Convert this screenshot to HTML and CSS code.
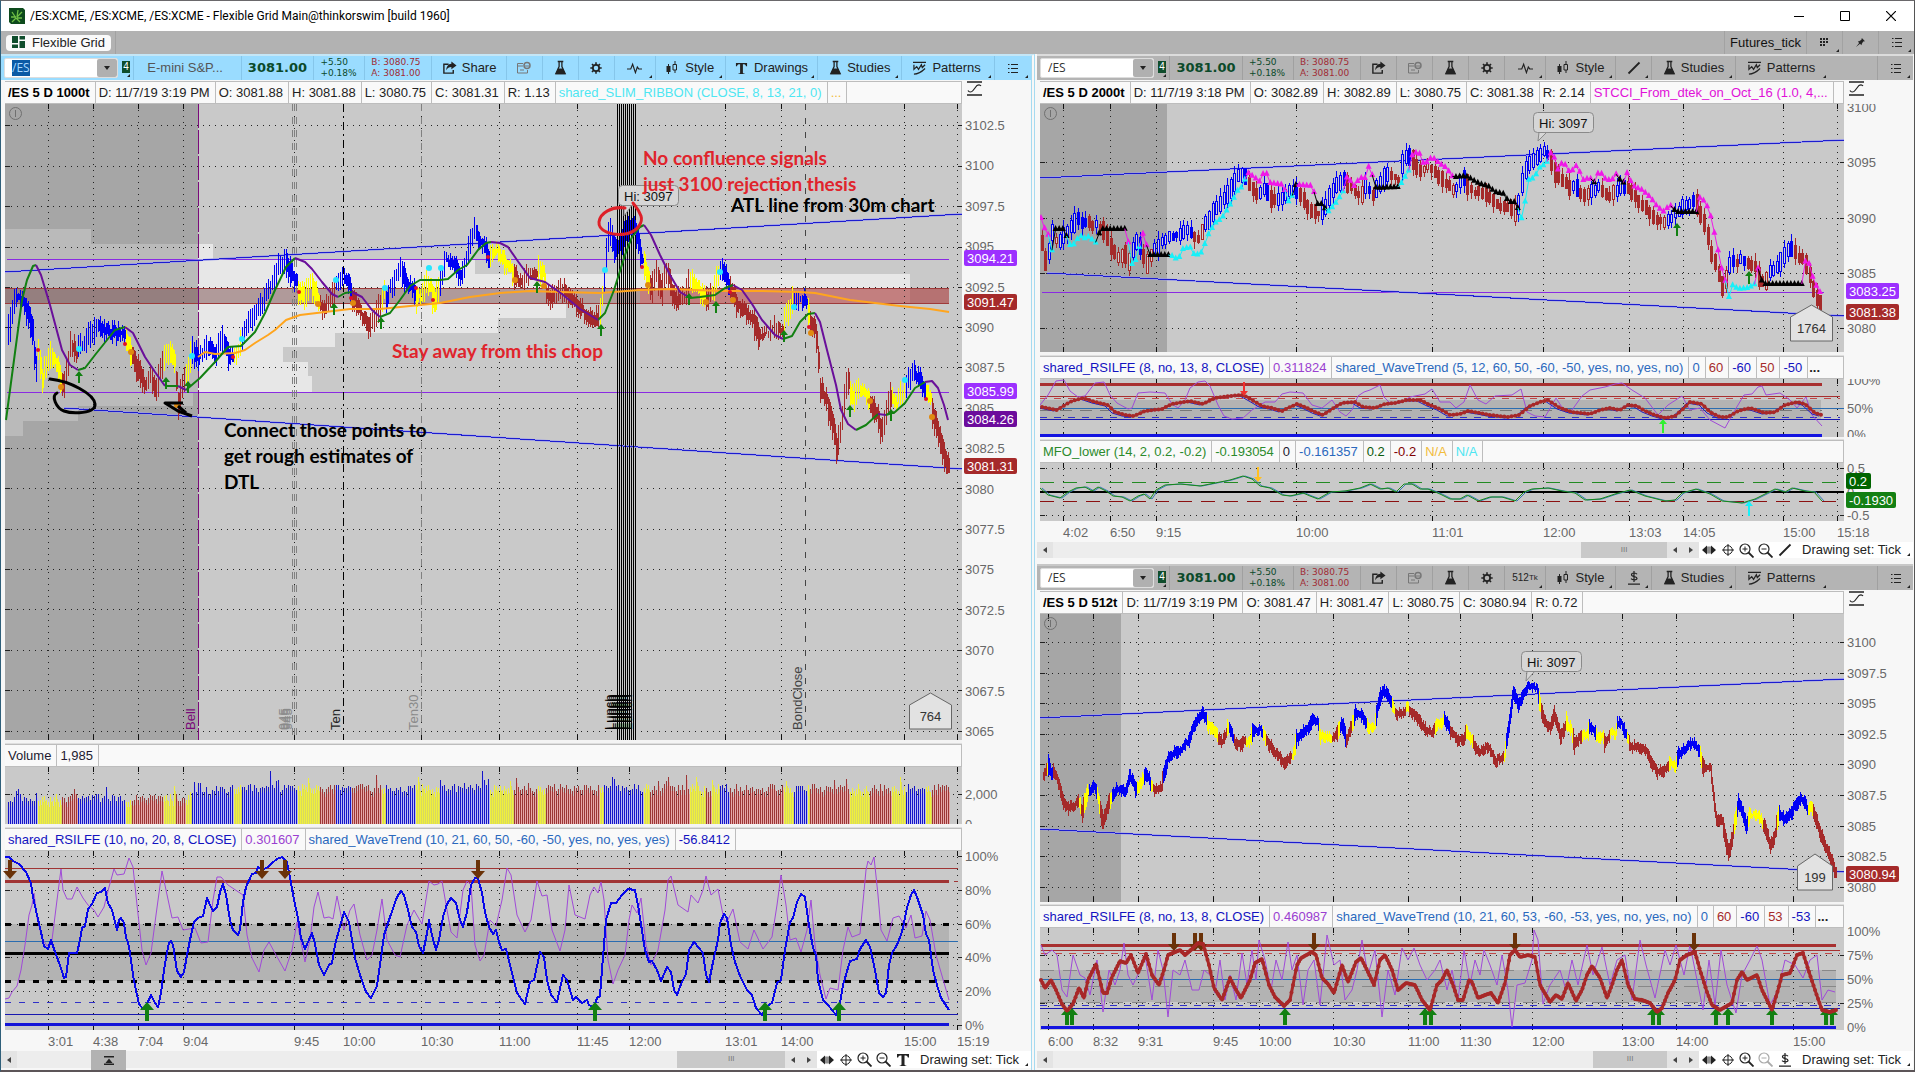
FILE: index.html
```html
<!DOCTYPE html>
<html lang="en">
<head>
<meta charset="utf-8">
<title>/ES:XCME, /ES:XCME, /ES:XCME - Flexible Grid Main@thinkorswim [build 1960]</title>
<link rel="stylesheet" href="styles.css">
</head>
<body>
<svg class="defs" aria-hidden="true">
  <symbol id="i-share" viewBox="0 0 16 14"><path d="M7 3H2v9.500h10V9" fill="none" stroke="currentColor" stroke-width="1.500"/><path d="M10 0l5.500 4.200L10 8.400V6C7.500 6 6 7 4.500 9.500 4.700 5.500 6.500 2.800 10 2.500z" fill="currentColor"/></symbol>
  <symbol id="i-event" viewBox="0 0 16 14"><path d="M7 2.500H1.500v9.500h10V9M1.500 5H7" fill="none" stroke="currentColor"/><circle cx="11" cy="4.500" r="3" fill="none" stroke="currentColor" stroke-width="1.500"/><path d="M8.500 5h5M4 9h4" stroke="currentColor"/></symbol>
  <symbol id="i-flask" viewBox="0 0 14 16"><path d="M4 1h6M5.500 1v5.500L2 14h10L8.500 6.500V1" fill="none" stroke="currentColor" stroke-width="1.400"/><path d="M4.500 8.500h5L12.500 14.800h-11z" fill="currentColor"/></symbol>
  <symbol id="i-gear" viewBox="0 0 16 16"><circle cx="8" cy="8" r="3.600" fill="none" stroke="currentColor" stroke-width="2"/><path d="M8 1.500v3M8 11.500v3M1.500 8h3M11.500 8h3M3.400 3.400l2 2M10.600 10.600l2 2M12.600 3.400l-2 2M5.400 10.600l-2 2" stroke="currentColor" stroke-width="1.800"/></symbol>
  <symbol id="i-pulse" viewBox="0 0 16 12"><path d="M0 7h4l2-5 3 9 2-6 1.500 2H16" fill="none" stroke="currentColor" stroke-width="1.200"/></symbol>
  <symbol id="i-candle" viewBox="0 0 12 14"><path d="M2.500 3v10M9 0v3M9 9v3" stroke="currentColor"/><path d="M.5 5h4v6h-4z" fill="currentColor"/><path d="M7 3.500h3.500V9H7z" fill="none" stroke="currentColor"/></symbol>
  <symbol id="i-text" viewBox="0 0 14 14"><path d="M1 1h12v3.600h-1.200C11.500 3 11 2.500 8.500 2.500v8.800c0 .9.500 1.200 1.800 1.200V13H3.700v-.5c1.300 0 1.800-.3 1.800-1.200V2.500C3 2.500 2.500 3 2.200 4.600H1z" fill="currentColor"/></symbol>
  <symbol id="i-pattern" viewBox="0 0 14 15"><path d="M0 1.500h14M1 4v5l3-3 2 3 3-5 1 3 3-3M1 14c4 0 8-2 12-6" fill="none" stroke="currentColor" stroke-width="1.300"/></symbol>
  <symbol id="i-list" viewBox="0 0 10 11"><path d="M3 1.500h7M3 5.500h7M3 9.500h7M0 1.500h1.500M0 5.500h1.500M0 9.500h1.500" stroke="currentColor"/></symbol>
  <symbol id="i-line" viewBox="0 0 14 14"><path d="M1.500 12.500l11-11" stroke="currentColor" stroke-width="1.800"/></symbol>
  <symbol id="i-dollar" viewBox="0 0 12 14"><path d="M0 13.200h12M6 0v11M9 3.200C8 1.500 3.500 1.500 3.500 3.700c0 2.600 5.500 1.200 5.500 3.600 0 2-4.500 2-6 .3" fill="none" stroke="currentColor" stroke-width="1.200"/></symbol>
  <symbol id="i-curve" viewBox="0 0 15 15"><path d="M0 1h15M0 14h15" stroke="currentColor" stroke-width="1.600"/><path d="M1 9.500c1 2 3.500 2 5 0l4-5c1.500-1 3-1 4 .5" fill="none" stroke="currentColor" stroke-width="1.200"/></symbol>
  <symbol id="i-pan" viewBox="0 0 14 12"><path d="M0 6l5-4.500v9zM14 6L9 1.500v9z" fill="currentColor"/><path d="M6 2.500v7M8 2.500v7" stroke="currentColor"/></symbol>
  <symbol id="i-cross" viewBox="0 0 12 12"><circle cx="6" cy="6" r="4.300" fill="none" stroke="currentColor"/><path d="M6 0v12M0 6h12" stroke="currentColor"/></symbol>
  <symbol id="i-zin" viewBox="0 0 15 15"><circle cx="6" cy="6" r="5" fill="none" stroke="currentColor" stroke-width="1.200"/><path d="M9.500 9.500l5 5" stroke="currentColor" stroke-width="1.800"/><path d="M6 3.500v5M3.500 6h5" stroke="currentColor"/></symbol>
  <symbol id="i-zout" viewBox="0 0 15 15"><circle cx="6" cy="6" r="5" fill="none" stroke="currentColor" stroke-width="1.200"/><path d="M9.500 9.500l5 5" stroke="currentColor" stroke-width="1.800"/><path d="M3.500 6h5" stroke="currentColor"/></symbol>
  <symbol id="i-dots" viewBox="0 0 9 9"><path d="M0 0h2v2H0zM3 0h2v2H3zM6 0h2v2H6zM0 3h2v2H0zM3 3h2v2H3zM6 3h2v2H6zM0 6h2v2H0zM3 6h2v2H3z" fill="currentColor"/></symbol>
  <symbol id="i-pin" viewBox="0 0 10 10"><path d="M0 10l3.500-4.500L2 4l1.500-.5L6 2 6.500 0 10 3.500 8 4 6.500 6.500 6 8 4.500 6.500z" fill="currentColor"/></symbol>
  <symbol id="i-grid" viewBox="0 0 13 13"><path d="M0 0h6v7H0zM7.500 0H13v3.500H7.500zM0 8.500h6V12H0zM7.500 5H13v7H7.500z" fill="currentColor"/></symbol>
  <symbol id="i-left" viewBox="0 0 4 6"><path d="M4 0v6L0 3z" fill="currentColor"/></symbol>
  <symbol id="i-right" viewBox="0 0 4 6"><path d="M0 0v6l4-3z" fill="currentColor"/></symbol>
  <symbol id="i-top" viewBox="0 0 10 9"><path d="M0 .8h10M0 8.200h10" stroke="currentColor" stroke-width="1.500"/><path d="M5 2.500L8.500 7h-7z" fill="currentColor"/></symbol>
  <symbol id="i-min" viewBox="0 0 10 10"><path d="M0 5.500h10" stroke="currentColor"/></symbol>
  <symbol id="i-max" viewBox="0 0 10 10"><path d="M.5.500h9v9h-9z" fill="none" stroke="currentColor"/></symbol>
  <symbol id="i-close" viewBox="0 0 10 10"><path d="M0 0l10 10M10 0L0 10" stroke="currentColor" stroke-width="1.200"/></symbol>
  <symbol id="i-leaf" viewBox="0 0 16 16"><path d="M0 0h14l2 2v14H2l-2-2z" fill="#0d4a1c"/><path d="M7 10L3 4M8 9l1-7M8 9l5-5M8 10l5 0M7 10l-4 4M7 10l4 4M7 9L2 9" stroke="#6fbf45" stroke-width="1.300"/></symbol>
</svg>

<div class="window">
  <header class="titlebar">
    <svg class="logo"><use href="#i-leaf"/></svg>
    <h1>/ES:XCME, /ES:XCME, /ES:XCME - Flexible Grid Main@thinkorswim [build 1960]</h1>
    <div class="winbtns">
      <button aria-label="Minimize"><svg width="10" height="10"><use href="#i-min"/></svg></button>
      <button aria-label="Maximize"><svg width="10" height="10"><use href="#i-max"/></svg></button>
      <button aria-label="Close"><svg width="10" height="10"><use href="#i-close"/></svg></button>
    </div>
  </header>

  <nav class="tabs">
    <div class="tabslot"><button class="tab"><svg width="13" height="13"><use href="#i-grid"/></svg>Flexible Grid</button></div>
    <div class="tabtools">
      <button class="cell workspace">Futures_tick</button>
      <button class="cell ico more" aria-label="Layout"><svg width="9" height="9"><use href="#i-dots"/></svg></button>
      <button class="cell ico" aria-label="Pin"><svg width="9" height="9"><use href="#i-pin"/></svg></button>
      <button class="cell ico more" aria-label="Menu"><svg width="10" height="11"><use href="#i-list"/></svg></button>
    </div>
  </nav>

  <main class="workspace-grid">
    <section class="panel panel-main">
      <div class="toolbar active">
        <div class="sym">
          <div class="combo"><input id="sym1" aria-label="Symbol" value="/ES"><button aria-label="Symbol list"></button></div>
          <span class="link more">4</span>
        </div>
        <span class="cell name">E-mini S&amp;P...</span>
        <span class="cell last">3081.00</span>
        <span class="cell chg"><span>+5.50</span><span>+0.18%</span></span>
        <span class="cell ba"><span>B: 3080.75</span><span>A: 3081.00</span></span>
        <button class="cell share"><svg width="15" height="14"><use href="#i-share"/></svg>Share</button>
        <button class="cell ico dim" aria-label="Events"><svg width="16" height="14"><use href="#i-event"/></svg></button>
        <button class="cell ico" aria-label="Flask"><svg width="13" height="16"><use href="#i-flask"/></svg></button>
        <button class="cell ico" aria-label="Settings"><svg width="14" height="14"><use href="#i-gear"/></svg></button>
        <button class="cell tf more" aria-label="Time frame"><svg width="15" height="12"><use href="#i-pulse"/></svg></button>
        <button class="cell style more"><svg width="12" height="14"><use href="#i-candle"/></svg>Style</button>
        <button class="cell drawings more"><svg width="13" height="13"><use href="#i-text"/></svg>Drawings</button>
        <button class="cell studies more"><svg width="13" height="16"><use href="#i-flask"/></svg>Studies</button>
        <button class="cell patterns more"><svg width="13" height="14"><use href="#i-pattern"/></svg>Patterns</button>
        <button class="cell ico last-cell more" aria-label="Menu"><svg width="10" height="11"><use href="#i-list"/></svg></button>
      </div>
      <div class="body">
        <div class="legendrow first">
          <div class="legend"><b>/ES 5 D 1000t</b><span>D: 11/7/19 3:19 PM</span><span>O: 3081.88</span><span>H: 3081.88</span><span>L: 3080.75</span><span>C: 3081.31</span><span>R: 1.13</span><span class="c-cyan">shared_SLIM_RIBBON (CLOSE, 8, 13, 21, 0)</span><span class="c-gold">...</span></div>
          <svg class="curve"><use href="#i-curve"/></svg>
        </div>
        <svg class="pane p-636" data-chart="main"></svg>
        <div class="split wide"></div>
        <div class="legendrow"><div class="legend"><span class="c-ink">Volume</span><span class="c-ink">1,985</span></div></div>
        <svg class="pane p-57" data-chart="volume"></svg>
        <div class="split wide"></div>
        <div class="legendrow"><div class="legend"><span class="c-navy">shared_RSILFE (10, no, 20, 8, CLOSE)</span><span class="c-violet">0.301607</span><span class="c-blue">shared_WaveTrend (10, 21, 60, 50, -60, -50, yes, no, yes, yes)</span><span class="c-navy">-56.8412</span></div></div>
        <svg class="pane open-edge p-179" data-chart="osc"></svg>
        <svg class="times" data-chart="timesMain"></svg>
      </div>
      <footer class="scroll">
        <button class="sb" aria-label="Scroll left"><svg width="4" height="6"><use href="#i-left"/></svg></button>
        <div class="track"><div class="thumb t-14">III</div></div>
        <button class="sb" aria-label="Step left"><svg width="4" height="6"><use href="#i-left"/></svg></button>
        <button class="sb" aria-label="Step right"><svg width="4" height="6"><use href="#i-right"/></svg></button>
        <div class="tools">
          <button aria-label="Pan"><svg width="14" height="12"><use href="#i-pan"/></svg></button>
          <button aria-label="Crosshair"><svg width="12" height="12"><use href="#i-cross"/></svg></button>
          <button aria-label="Zoom in"><svg width="15" height="15"><use href="#i-zin"/></svg></button>
          <button aria-label="Zoom out"><svg width="15" height="15"><use href="#i-zout"/></svg></button>
          <button aria-label="Text"><svg width="14" height="14"><use href="#i-text"/></svg></button>
          <button class="set more">Drawing set: Tick</button>
        </div>
        <button class="pop" aria-label="Expand"><svg width="10" height="9"><use href="#i-top"/></svg></button>
      </footer>
    </section>

    <div class="right">
      <section class="panel panel-top">
        <div class="toolbar">
          <div class="sym">
            <div class="combo"><input aria-label="Symbol" value="/ES"><button aria-label="Symbol list"></button></div>
            <span class="link more">4</span>
          </div>
          <span class="cell last">3081.00</span>
          <span class="cell chg"><span>+5.50</span><span>+0.18%</span></span>
          <span class="cell ba"><span>B: 3080.75</span><span>A: 3081.00</span></span>
          <button class="cell ico" aria-label="Share"><svg width="15" height="14"><use href="#i-share"/></svg></button>
          <button class="cell ico dim" aria-label="Events"><svg width="16" height="14"><use href="#i-event"/></svg></button>
          <button class="cell ico" aria-label="Flask"><svg width="13" height="16"><use href="#i-flask"/></svg></button>
          <button class="cell ico" aria-label="Settings"><svg width="14" height="14"><use href="#i-gear"/></svg></button>
          <button class="cell tf more" aria-label="Time frame"><svg width="15" height="12"><use href="#i-pulse"/></svg></button>
          <button class="cell style more"><svg width="12" height="14"><use href="#i-candle"/></svg>Style</button>
          <button class="cell ico more" aria-label="Line"><svg width="14" height="14"><use href="#i-line"/></svg></button>
          <button class="cell studies more"><svg width="13" height="16"><use href="#i-flask"/></svg>Studies</button>
          <button class="cell patterns open more"><svg width="13" height="14"><use href="#i-pattern"/></svg>Patterns</button>
          <button class="cell ico last-cell ruled more" aria-label="Menu"><svg width="10" height="11"><use href="#i-list"/></svg></button>
        </div>
        <div class="body">
          <div class="legendrow first">
            <div class="legend"><b>/ES 5 D 2000t</b><span>D: 11/7/19 3:18 PM</span><span>O: 3082.89</span><span>H: 3082.89</span><span>L: 3080.75</span><span>C: 3081.38</span><span>R: 2.14</span><span class="c-magenta">STCCI_From_dtek_on_Oct_16 (1.0, 4,...</span></div>
            <svg class="curve"><use href="#i-curve"/></svg>
          </div>
          <svg class="pane p-248" data-chart="top"></svg>
          <div class="split wide"></div>
          <div class="legendrow"><div class="legend"><span class="c-navy">shared_RSILFE (8, no, 13, 8, CLOSE)</span><span class="c-violet">0.311824</span><span class="c-blue">shared_WaveTrend (5, 12, 60, 50, -60, -50, yes, no, yes, no)</span><span class="c-blue">0</span><span class="c-brown">60</span><span class="c-navy">-60</span><span class="c-brown">50</span><span class="c-navy">-50</span><i>...</i></div></div>
          <svg class="pane p-58" data-chart="rsiTop"></svg>
          <div class="split"></div>
          <div class="legendrow"><div class="legend"><span class="c-green">MFO_lower (14, 2, 0.2, -0.2)</span><span class="c-green">-0.193054</span><span class="c-ink">0</span><span class="c-blue">-0.161357</span><span class="c-dgreen">0.2</span><span class="c-maroon">-0.2</span><span class="c-gold">N/A</span><span class="c-cyan">N/A</span></div></div>
          <svg class="pane p-58" data-chart="mfo"></svg>
          <svg class="times" data-chart="timesTop"></svg>
        </div>
        <footer class="scroll">
          <button class="sb" aria-label="Scroll left"><svg width="4" height="6"><use href="#i-left"/></svg></button>
          <div class="track"><div class="thumb t-13">III</div></div>
          <button class="sb" aria-label="Step left"><svg width="4" height="6"><use href="#i-left"/></svg></button>
          <button class="sb" aria-label="Step right"><svg width="4" height="6"><use href="#i-right"/></svg></button>
          <div class="tools">
            <button aria-label="Pan"><svg width="14" height="12"><use href="#i-pan"/></svg></button>
            <button aria-label="Crosshair"><svg width="12" height="12"><use href="#i-cross"/></svg></button>
            <button aria-label="Zoom in"><svg width="15" height="15"><use href="#i-zin"/></svg></button>
            <button aria-label="Zoom out"><svg width="15" height="15"><use href="#i-zout"/></svg></button>
            <button aria-label="Line"><svg width="14" height="14"><use href="#i-line"/></svg></button>
            <button class="set more">Drawing set: Tick</button>
          </div>
        </footer>
      </section>

      <section class="panel panel-bottom">
        <div class="toolbar">
          <div class="sym">
            <div class="combo"><input aria-label="Symbol" value="/ES"><button aria-label="Symbol list"></button></div>
            <span class="link more">4</span>
          </div>
          <span class="cell last">3081.00</span>
          <span class="cell chg"><span>+5.50</span><span>+0.18%</span></span>
          <span class="cell ba"><span>B: 3080.75</span><span>A: 3081.00</span></span>
          <button class="cell ico" aria-label="Share"><svg width="15" height="14"><use href="#i-share"/></svg></button>
          <button class="cell ico dim" aria-label="Events"><svg width="16" height="14"><use href="#i-event"/></svg></button>
          <button class="cell ico" aria-label="Flask"><svg width="13" height="16"><use href="#i-flask"/></svg></button>
          <button class="cell ico" aria-label="Settings"><svg width="14" height="14"><use href="#i-gear"/></svg></button>
          <button class="cell tf more">512<small>Tk</small></button>
          <button class="cell style more"><svg width="12" height="14"><use href="#i-candle"/></svg>Style</button>
          <button class="cell ico more" aria-label="Price level"><svg width="12" height="14"><use href="#i-dollar"/></svg></button>
          <button class="cell studies more"><svg width="13" height="16"><use href="#i-flask"/></svg>Studies</button>
          <button class="cell patterns open more"><svg width="13" height="14"><use href="#i-pattern"/></svg>Patterns</button>
          <button class="cell ico last-cell ruled more" aria-label="Menu"><svg width="10" height="11"><use href="#i-list"/></svg></button>
        </div>
        <div class="body">
          <div class="legendrow first">
            <div class="legend"><b>/ES 5 D 512t</b><span>D: 11/7/19 3:19 PM</span><span>O: 3081.47</span><span>H: 3081.47</span><span>L: 3080.75</span><span>C: 3080.94</span><span>R: 0.72</span></div>
            <svg class="curve"><use href="#i-curve"/></svg>
          </div>
          <svg class="pane p-288" data-chart="bottom"></svg>
          <div class="split"></div>
          <div class="legendrow"><div class="legend"><span class="c-navy">shared_RSILFE (8, no, 13, 8, CLOSE)</span><span class="c-violet">0.460987</span><span class="c-blue">shared_WaveTrend (10, 21, 60, 53, -60, -53, yes, no, yes, no)</span><span class="c-blue">0</span><span class="c-brown">60</span><span class="c-navy">-60</span><span class="c-brown">53</span><span class="c-navy">-53</span><i>...</i></div></div>
          <svg class="pane open-edge p-102" data-chart="rsiBottom"></svg>
          <svg class="times" data-chart="timesBottom"></svg>
        </div>
        <footer class="scroll">
          <button class="sb" aria-label="Scroll left"><svg width="4" height="6"><use href="#i-left"/></svg></button>
          <div class="track"><div class="thumb t-12">III</div></div>
          <button class="sb" aria-label="Step left"><svg width="4" height="6"><use href="#i-left"/></svg></button>
          <button class="sb" aria-label="Step right"><svg width="4" height="6"><use href="#i-right"/></svg></button>
          <div class="tools">
            <button aria-label="Pan"><svg width="14" height="12"><use href="#i-pan"/></svg></button>
            <button aria-label="Crosshair"><svg width="12" height="12"><use href="#i-cross"/></svg></button>
            <button aria-label="Zoom in"><svg width="15" height="15"><use href="#i-zin"/></svg></button>
            <button class="off" aria-label="Zoom out"><svg width="15" height="15"><use href="#i-zout"/></svg></button>
            <button aria-label="Price level"><svg width="12" height="14"><use href="#i-dollar"/></svg></button>
            <button class="set more">Drawing set: Tick</button>
          </div>
        </footer>
      </section>
    </div>
  </main>
</div>
<script src="charts.js"></script>
</body>
</html>
```
FILE: styles.css
```css
* { box-sizing: border-box; }
html, body { height: 100%; }
body {
  margin: 0;
  background: #f7f7f7;
  color: #222;
  font: 13px/16px "Liberation Sans", Arial, sans-serif;
}
button, input { font: inherit; color: inherit; }
button { background: none; border: 0; padding: 0; margin: 0; }
svg { flex: none; }
.defs { position: absolute; width: 0; height: 0; }

.window {
  display: flex;
  flex-direction: column;
  min-height: 100%;
  border-top: 1px solid #6a686b;
  border-left: 1px solid #2f5f7a;
  border-right: 1px solid #555;
  border-bottom: 2px solid #5c5558;
}

.titlebar { display: flex; align-items: center; height: 30px; background: #fff; padding-left: 8px; }
.titlebar .logo { width: 16px; height: 16px; }
.titlebar h1 { flex: 1; margin: 0 0 0 5px; font: 12px/16px Roboto, "Open Sans", sans-serif; color: #000; white-space: nowrap; }
.winbtns { display: flex; color: #000; }
.winbtns button { width: 46px; height: 30px; display: flex; align-items: center; justify-content: center; }

.tabs { display: flex; justify-content: space-between; height: 23px; background: #b2b2b2; }
.tabslot { display: flex; align-items: center; padding: 0 4px 0 5px; border-right: 1px solid #a2a2a2; }
.tab { display: flex; align-items: center; gap: 7px; height: 16px; padding: 0 6px; background: #fafafa; border-radius: 4px; }
.tab svg { color: #0f4d2c; }
.tabtools { display: flex; }
.tabtools .cell { border-left: 1px solid #a2a2a2; border-right: 0; }
.workspace { width: 82px; color: #111; }

.workspace-grid { flex: 1; display: grid; grid-template-columns: 1036fr 877fr; }
.right { display: flex; flex-direction: column; min-width: 0; padding-right: 1px; }
.panel { display: flex; flex-direction: column; min-width: 0; border-top: 2px solid #dcdcdc; padding-bottom: 2px; }
.panel-main { border-right: 4px double #a6daf0; border-top-color: #c4e6f6; margin-right: 2px; }
.panel-top { flex: 364 1 146px; padding-bottom: 6px; }
.panel-bottom { flex: 390 1 116px; border-top-color: #c8c8c8; }

.toolbar { display: flex; height: 24px; background: #b4b4b4; padding-left: 3px; }
.toolbar.active { background: #9adcff; padding-left: 3px; }
.cell { position: relative; display: flex; align-items: center; justify-content: center; border-right: 1px solid #a0a0a0; white-space: nowrap; }
.active .cell { border-color: #86c6ea; }
.more { position: relative; }
.more::after { content: ""; position: absolute; right: 3px; bottom: 2px; border-left: 3px solid transparent; border-bottom: 3px solid #222; }
.sym { display: flex; align-items: center; gap: 4px; width: 130px; border-right: 1px solid #a0a0a0; }
.active .sym { border-color: #86c6ea; }
.combo { display: flex; width: 114px; height: 20px; background: #fff; border: 1px solid #ddd; border-radius: 2px; }
.combo input { flex: 1; min-width: 0; border: 0; outline: 0; background: none; padding: 0 0 0 7px; font: 12px/16px "Open Sans", "Noto Sans", sans-serif; color: #333; }
.combo input::selection { background: #0b5aa5; color: #a8d8ff; }
.combo button { position: relative; width: 20px; background: #b0b0b0; border-radius: 2px; }
.combo button::after { content: ""; position: absolute; left: 7px; top: 7px; border: 3px solid transparent; border-top: 4px solid #222; }
.link { width: 8px; height: 16px; margin-top: 2px; font: 10px/12px "Liberation Sans", sans-serif; color: #fff; text-align: center; background: linear-gradient(#0f4d2c 12px, transparent 12px); }
.link.more::after { right: 0; bottom: 0; }
.name { width: 108px; color: #555; padding-right: 4px; }
.last { width: 73px; font: bold 13px/16px "DejaVu Sans", Verdana, sans-serif; color: #0b4a2a; }
.chg, .ba { flex-direction: column; align-items: flex-start; padding-left: 6px; font: 9px/11px "DejaVu Sans", Verdana, sans-serif; }
.chg { width: 51px; color: #0b4a2a; }
.ba { width: 67px; color: #a02c34; }
.share { width: 75px; gap: 5px; }
.ico { width: 36px; }
.dim { color: #777; }
.tf { width: 41px; font-size: 10px; }
.tf small { font-size: 8px; }
.style { width: 70px; gap: 7px; }
.drawings { width: 93px; gap: 6px; }
.studies { width: 84px; gap: 5px; }
.patterns { width: 93px; gap: 6px; padding-right: 2px; }
.patterns.open { border-right: 0; }
.last-cell { margin-left: auto; border-right: 0; }
.last-cell.ruled { border-left: 1px solid #a0a0a0; }

.body { flex: 1; display: flex; flex-direction: column; padding-left: 3px; }
.panel-main .body { padding-left: 4px; }
.legendrow { display: flex; gap: 5px; }
.legendrow.first { margin-top: 1px; }
.legend {
  flex: 1; min-width: 0; display: flex; height: 23px; margin-right: 69px; overflow: hidden;
  border: 1px solid #bdbdbd; border-left: 0; background: #f9f9f9;
  line-height: 21px; white-space: nowrap;
}
.first .legend { margin-right: 0; }
.curve { width: 15px; height: 15px; margin-right: 49px; }
.legend > * { padding: 0 5px 0 3px; border-right: 1px solid #bdbdbd; font-style: normal; }
.legend > i { border: 0; padding: 0 1px; font-weight: bold; }
.legend b { color: #000; }
.c-cyan { color: #4ee6f2; } .c-gold { color: #f2bc3c; } .c-ink { color: #221a30; }
.c-navy { color: #1212c0; } .c-violet { color: #9a3fd0; } .c-blue { color: #2a68bd; }
.c-brown { color: #a52a2a; } .c-green { color: #2c8a2c; } .c-dgreen { color: #0b5a0b; }
.c-maroon { color: #800000; } .c-magenta { color: #e010d8; }

.pane, .times { display: block; width: 100%; overflow: hidden; }
.open-edge { overflow: visible; }
.times { height: 21px; }
.p-636 { flex: 636 1 0; height: 0; } .p-57 { flex: 57 1 0; height: 0; } .p-179 { flex: 179 1 0; height: 0; }
.p-248 { flex: 248 1 0; height: 0; } .p-58 { flex: 58 1 0; height: 0; }
.p-288 { flex: 288 1 0; height: 0; } .p-102 { flex: 102 1 0; height: 0; }
.split { height: 3px; margin-right: 69px; border-bottom: 1px solid #dedede; background: #f4f4f4; }
.split.wide { height: 4px; }

.pane text, .times text { font: 13px "Liberation Sans", Arial, sans-serif; fill: #686868; }
.pane .tag { fill: #fff; }
.pane .ink { fill: #111; }
.pane .badge { fill: #333; text-anchor: middle; }
.pane .note { font: bold 19px Lato, "Open Sans", sans-serif; }
.pane .red { fill: #e0242c; }
.pane .black { fill: #000; }

.scroll { position: relative; display: flex; height: 17px; background: #f7f7f7; }
.panel-top .scroll { height: 16px; }
.sb { width: 16px; background: #e4e4e4; color: #444; display: flex; align-items: center; justify-content: center; }
.track { flex: 1; display: flex; justify-content: flex-end; background: #ededed; }
.thumb { background: #c9c9c9; color: #777; font-size: 8px; line-height: 16px; text-align: center; }
.t-14 { width: 14%; } .t-13 { width: 14%; } .t-12 { width: 12%; }
.tools { display: flex; width: 214px; background: #fff; }
.tools button { width: 19px; display: flex; align-items: center; justify-content: center; white-space: nowrap; }
.tools .off { color: #aaa; }
.tools .set { flex: 1; justify-content: flex-start; padding-left: 8px; }
.pop { position: absolute; left: 90px; top: -1px; width: 35px; height: 20px; background: #b2b2b2; display: flex; align-items: center; justify-content: center; }
```
FILE: charts.js
```js
const NS = 'http://www.w3.org/2000/svg';
const AXIS = 69;
const COL = { b: '#0000f5', r: '#a52a2a', y: '#ffff00' };

function rng(seed) {
  let s = seed;
  return () => (s = (s * 16807) % 2147483647) / 2147483647;
}
function pts(str) {
  return str.trim().split(/\s+/).map(p => p.split(',').map(Number));
}
function segments(str) {
  return str.trim().split(/\s*;\s*/).map(s => ({ c: s[0], p: pts(s.slice(1)) }));
}

/* Drawing surface: design units are mapped to the pane's current size. */
function surface(svg, o) {
  const W = svg.clientWidth, H = svg.clientHeight;
  const sx = (W - AXIS) / o.w, sy = H / o.h;
  const X = v => (v - o.x) * sx, Y = v => (v - o.y) * sy;
  svg.textContent = '';
  const add = (n, a, t) => {
    const e = document.createElementNS(NS, n);
    for (const k in a) e.setAttribute(k, a[k]);
    if (t !== undefined) e.textContent = t;
    svg.appendChild(e);
    return e;
  };
  const c = { X, Y, W, H, add, o, sx, sy };
  c.rect = (x1, y1, x2, y2, fill, extra) => add('rect', Object.assign({ x: X(x1), y: Y(y1), width: X(x2) - X(x1), height: Y(y2) - Y(y1), fill }, extra));
  c.path = (d, a) => add('path', Object.assign({ d, fill: 'none' }, a));
  c.poly = (str, stroke, width, extra) => {
    const d = (typeof str === 'string' ? pts(str) : str).map((p, i) => (i ? 'L' : 'M') + X(p[0]) + ' ' + Y(p[1])).join('');
    return c.path(d, Object.assign({ stroke, 'stroke-width': width || 1, 'stroke-linejoin': 'round' }, extra));
  };
  c.crisp = (str, stroke, width) => c.poly(str, stroke, width, { 'shape-rendering': 'crispEdges' });
  c.h = (y, x1, x2, stroke, width, dash) => {
    const yy = Math.floor(Y(y)) + ((width || 1) % 2 ? 0.5 : 0);
    return c.path('M' + X(x1) + ' ' + yy + 'H' + X(x2), { stroke, 'stroke-width': width || 1, 'stroke-dasharray': dash || 'none', 'shape-rendering': 'crispEdges' });
  };
  c.v = (x, stroke, width, dash) => {
    const xx = Math.floor(X(x)) + 0.5;
    return c.path('M' + xx + ' 0V' + H, { stroke, 'stroke-width': width || 1, 'stroke-dasharray': dash || 'none', 'shape-rendering': 'crispEdges' });
  };
  c.grid = (xs, ys) => {
    const right = X(o.x + o.w);
    ys.forEach(y => {
      c.h(y, o.x, o.x + o.w, '#222', 1, '1 5');
      const yy = Math.floor(Y(y)) + 0.5;
      c.path('M0 ' + yy + 'h5M' + right + ' ' + yy + 'h-4', { stroke: '#222', 'shape-rendering': 'crispEdges' });
    });
    xs.forEach(x => {
      c.v(x, '#222', 1, '1 5');
      const xx = Math.floor(X(x)) + 0.5;
      c.path('M' + xx + ' 0v5M' + xx + ' ' + H + 'v-5', { stroke: '#111', 'shape-rendering': 'crispEdges' });
    });
  };
  c.label = (y, t) => add('text', { x: X(o.x + o.w) + 3, y: Y(y) + 5 }, t);
  c.tag = (y, t, fill, w) => {
    const x = X(o.x + o.w) + 2;
    add('rect', { x, y: Y(y) - 8, width: w || 53, height: 16, rx: 2, fill });
    add('text', { x: x + 3, y: Y(y) + 5, class: 'tag' }, t);
  };
  c.text = (x, y, t, cls, a) => add('text', Object.assign({ x: X(x), y: Y(y), class: cls || '' }, a), t);
  c.up = (x, y, s, l, fill) => {
    const a = X(x), b = Y(y), w = s > 5 ? 2 : 1;
    c.path(`M${a} ${b}l${s} ${s + 1}h${w - s}v${l}h${-2 * w}v${-l}h${w - s}z`, { fill });
  };
  c.down = (x, y, s, l, fill) => {
    const a = X(x), b = Y(y), w = s > 5 ? 2 : 1;
    c.path(`M${a} ${b}l${s} ${-s - 1}h${w - s}v${-l}h${-2 * w}v${l}h${w - s}z`, { fill });
  };
  c.dots = (str, fill, r) => pts(str).forEach(p => add('circle', { cx: X(p[0]), cy: Y(p[1]), r, fill }));
  c.callout = (x, y, tx, ty) => {
    const a = X(x), b = Y(y);
    c.path(`M${X(tx)} ${Y(ty)}L${a + 6} ${b + 20}h8z`, { fill: '#d6d6d6', stroke: '#8a8a8a' });
    add('rect', { x: a + 0.5, y: b + 0.5, width: 60, height: 20, rx: 4, fill: '#d6d6d6', stroke: '#8a8a8a' });
    add('text', { x: a + 6, y: b + 16, class: 'ink' }, 'Hi: 3097');
  };
  c.house = (x1, x2, y, yb, t) => {
    const a = X(x1), b = X(x2), m = (a + b) / 2;
    c.path(`M${m} ${Y(y)}L${b} ${Y(y) + 12}V${Y(yb)}H${a}V${Y(y) + 12}z`, { fill: '#e2e2e2', stroke: '#666' });
    add('text', { x: m, y: Y(yb) - 8, class: 'badge' }, t);
  };
  c.clock = () => {
    add('circle', { cx: 10.5, cy: 9.500, r: 6, fill: 'none', stroke: '#707070' });
    c.path('M10.500 6v7', { stroke: '#707070' });
  };
  return c;
}

/* Interpolated series of {x, y, slope, colour} from coloured segments. */
function sample(segs, step) {
  const all = [];
  segs.forEach(s => s.p.forEach(p => all.push([p[0], p[1], s.c])));
  const out = [];
  let i = 0;
  for (let x = all[0][0]; x <= all[all.length - 1][0]; x += step) {
    while (i < all.length - 2 && x > all[i + 1][0]) i++;
    const [x1, y1, c1] = all[i], [x2, y2, c2] = all[i + 1];
    const t = (x - x1) / (x2 - x1);
    out.push({ x, y: y1 + (y2 - y1) * t, k: (y2 - y1) / (x2 - x1), c: t > 0.6 ? c2 : c1 });
  }
  return out;
}

function candles(c, segs, step, wHollow, wSolid, body, wick, seed) {
  const r = rng(seed), solid = {}, hollow = {}, lines = {};
  sample(segs, step).forEach(s => {
    const n = (r() - 0.5) * body * 1.4;
    const half = 1 + r() * body + Math.min(6, Math.abs(s.k) * step);
    const top = Math.round(c.Y(s.y + n - half)), bot = Math.round(c.Y(s.y + n + half));
    const hi = Math.round(top - r() * wick), lo = Math.round(bot + r() * wick);
    const x = Math.floor(c.X(s.x)) + 0.5, k = s.c, w = s.k < 0 ? wHollow : wSolid;
    lines[k] = (lines[k] || '') + `M${x} ${hi}V${top}M${x} ${bot}V${lo}`;
    const left = x - Math.floor((w - 1) / 2);
    const d = w === 1 ? `M${x} ${top}V${bot}` : `M${left} ${top + 0.5}h${w - 1}V${bot + 0.5}h${1 - w}z`;
    if (s.k < 0) hollow[k] = (hollow[k] || '') + d; else solid[k] = (solid[k] || '') + d;
  });
  for (const k in lines) c.path(lines[k], { stroke: COL[k], 'shape-rendering': 'crispEdges' });
  for (const k in hollow) c.path(hollow[k], { stroke: COL[k], fill: '#d0d0d0', 'shape-rendering': 'crispEdges' });
  for (const k in solid) c.path(solid[k], { stroke: COL[k], fill: COL[k], 'shape-rendering': 'crispEdges' });
}

const MAIN = segments(`b 8,333 12,312 15,297 20,300 25,304 29,320 33,335 35,372;
y 38,352 42,378 46,365 50,352 56,362 60,382; r 61,370 63,390 67,365 70,345 74,350 77,355;
b 78,350 85,342 97,325 103,330 115,333 124,335; y 125,337 130,352; r 131,350 137,370 144,382 150,378 155,390 160,370;
y 164,355 169,352 174,362; r 176,380 178,403 183,385; y 187,370 190,358;
b 192,352 198,358 207,345 215,357 222,340 228,355 232,358; y 234,356 239,350;
b 241,340 250,320 256,310 265,295 272,285 278,267 284,259 290,274 297,280;
y 298,290 303,298 310,282 317,300; r 319,305 324,308 330,298 333,293; b 335,285 340,280 343,277 349,285;
r 352,298 360,312 368,325 374,320 380,308; y 382,300 384,292; b 386,298 393,282 400,268 406,282 413,288;
y 416,297 420,298 426,282 430,287 434,303 438,288; b 440,282 445,262 452,262 460,272 465,262 470,238 474,230 478,240 484,245 488,260;
y 490,252 496,252 503,260 510,268; r 514,278 520,283 528,275 536,276; y 538,268 543,275;
r 545,290 553,298 562,288 570,298 580,308 590,318 597,322; y 600,315 603,288;
b 604,280 607,245 610,235 615,252 620,245 626,230 632,224 636,232 638,242 641,262; y 643,262 648,280;
r 651,290 656,275 661,290 667,270 672,295 679,302 686,290; y 690,280 696,285 704,295; r 706,298 710,292; y 713,290 717,280;
b 720,270 726,280; r 730,290 736,302 745,312 753,320 758,335 764,335 770,330 777,327 782,328;
y 784,320 790,308; b 794,300 800,298 806,302; y 807,308 808,312;
r 811,325 815,330 817,345 820,390 826,400 833,425 836,447 840,435 844,400 847,375; y 849,390 853,400 858,388 866,392;
r 870,402 876,415 881,432 886,415 889,395; y 891,400 896,402 903,392; b 906,385 912,370 918,378 924,388;
y 926,392 930,396; r 932,410 940,440 946,462 948,465`);

const TOP = segments(`r 1042,245 1045,258 1047,262; b 1050,250 1053,232; r 1056,242; b 1060,240 1066,232 1072,226 1077,218 1083,222;
r 1088,222 1093,226; b 1097,225; r 1101,225 1106,234 1112,248 1118,256 1124,252 1129,262; b 1132,250 1138,240;
r 1143,250 1147,266 1150,255; b 1155,250 1162,242 1172,235 1180,236 1188,230; r 1194,236 1200,238;
b 1205,225 1215,210 1225,198 1235,180 1243,172; r 1248,180 1257,192; b 1262,190 1266,188; r 1272,198 1276,202;
b 1280,198 1290,190 1295,186; r 1300,195 1308,205 1316,213; b 1322,213 1328,200 1335,188 1344,178; r 1350,187 1358,192 1362,194;
b 1366,188 1370,190; r 1374,194; b 1378,188 1384,178 1388,172; r 1393,176 1399,178; b 1403,160 1409,154;
r 1415,164 1421,170 1428,168 1436,172 1444,182 1452,188; b 1457,186 1464,178; r 1470,190 1478,192 1485,194 1491,200 1500,205 1510,208 1514,212;
b 1520,200 1524,175 1530,162 1538,155 1545,150; r 1550,155 1556,172 1562,180 1570,188; b 1575,184; r 1580,192 1586,196; b 1592,190 1600,186;
r 1604,191 1610,195; b 1616,190 1624,184; r 1630,190 1640,202 1650,212 1656,220 1664,222; b 1670,218 1676,214 1684,206 1692,200;
r 1696,202 1702,215 1708,235 1712,255 1720,275 1724,292; b 1728,270 1732,258; r 1738,261; b 1742,260; r 1748,262 1756,268 1761,280 1764,283;
b 1770,272 1778,265 1786,252 1791,248; r 1797,255 1805,262 1810,275 1815,292 1821,303`);

const BOTTOM = segments(`r 1043,778 1045,774; y 1047,770; b 1048,764 1051,775; r 1053,770 1058,782 1063,800 1068,808 1074,805 1078,800;
y 1079,803; r 1082,814; y 1085,800 1087,790; b 1090,792 1094,786; y 1098,797; r 1101,815 1103,823 1106,812 1109,802; y 1110,800;
b 1112,795 1117,788 1125,790 1130,776 1135,788; y 1138,785 1142,780; b 1145,773 1149,780; y 1151,786; r 1154,791 1161,786;
b 1163,776 1168,758 1175,752 1182,746 1188,742 1193,730 1200,716 1203,713; y 1208,725 1216,732; r 1218,738 1222,742 1226,735; y 1227,728;
b 1229,725 1232,735; r 1235,742 1240,747 1243,740; y 1247,742 1250,740; b 1252,732 1260,729; y 1264,735; r 1267,742 1275,752 1285,763 1290,758;
y 1292,756 1294,752; b 1296,742 1303,733 1308,728 1313,719 1317,722; y 1320,735 1330,738; r 1332,740 1336,735; y 1338,730; b 1341,722 1344,732; r 1346,742 1350,730;
y 1352,725; b 1355,715 1360,713 1365,720; y 1368,726 1374,724; b 1377,710 1380,695 1383,690 1388,696 1390,702; y 1393,710; r 1396,715 1404,711;
y 1406,706; r 1410,712 1418,720 1425,730 1432,732; y 1436,725 1442,724; b 1444,717 1448,725; r 1450,732 1458,741 1464,738; y 1466,730 1471,738;
r 1473,744 1478,752 1485,747 1492,752 1496,761 1502,756; y 1504,757; b 1506,742 1510,715 1513,693 1518,706 1523,697 1528,687 1537,688; y 1539,702;
r 1542,715 1550,730 1554,716 1560,737 1565,727; y 1566,720 1571,730; r 1574,745 1580,738; y 1583,734 1587,735; b 1589,728 1594,733; y 1596,737 1602,734;
r 1604,742 1608,738; y 1610,733 1615,733; b 1617,724 1621,722 1625,732; y 1627,738; r 1630,745 1640,748 1648,755 1652,765 1657,773 1667,768;
y 1669,764 1675,766; b 1678,755 1685,749 1692,743 1698,748; y 1700,755; r 1703,768 1710,766 1713,795 1716,820 1722,822 1725,838 1728,853 1732,838;
y 1735,820; b 1738,803 1742,812 1746,825; y 1749,814 1755,815 1761,820; r 1764,826 1770,845 1775,834; y 1777,822; b 1779,812 1784,822 1790,815 1795,805 1800,798 1806,806;
y 1808,811 1811,808; r 1814,815 1820,832 1825,846 1830,858 1834,868 1836,873`);

const X_MAIN = [48, 93, 138, 183, 294, 343, 421, 499, 577, 629, 725, 781, 904, 957];
const X_TOP = [1063, 1110, 1156, 1296, 1432, 1543, 1629, 1683, 1783, 1837];
const X_BOT = [1048, 1093, 1138, 1213, 1259, 1333, 1408, 1460, 1532, 1622, 1676, 1793];

function zone(c, x) {
  c.rect(c.o.x, c.o.y, c.o.x + c.o.w, c.o.y + c.o.h, '#c9c9c9');
  if (x) c.rect(c.o.x, c.o.y, x, c.o.y + c.o.h, '#a6a6a6');
}
function times(c, xs, labels) {
  labels.forEach((t, i) => c.add('text', { x: c.X(xs[i]), y: 16 }, t));
}
function trend(c, x1, y1, x2, y2) {
  c.poly([[x1, y1], [x2, y2]], '#9a9aec', 2);
  c.crisp([[x1, y1], [x2, y2]], '#1c1cd0', 1);
}

const CHARTS = {
  main: { x: 5, y: 104, w: 957, h: 636, draw(c) {
    zone(c, 198);
    [[229, 244, 91], [244, 259, 213], [259, 274, 475], [274, 288, 910], [288, 303, 910], [303, 318, 566], [318, 333, 498], [333, 347, 335],
     [347, 362, 283], [362, 376, 308], [376, 392, 312], [392, 406, 193], [406, 421, 78], [421, 436, 23]].forEach(([a, b, x]) => {
      c.rect(5, a, Math.min(x, 198), b, '#bababa');
      if (x > 198) c.rect(198, a, x, b, '#e7e7e7');
    });
    c.rect(5, 288, 640, 303, 'rgba(95,40,40,.4)');
    c.rect(640, 288, 949, 303, 'rgba(165,42,42,.55)');
    c.grid(X_MAIN, [125, 166, 206, 247, 287, 327, 367, 408, 448, 488, 529, 569, 609, 650, 690, 731]);
    c.h(288, 5, 949, '#9e3a3a', 1); c.h(303, 5, 949, '#9e3a3a', 1);
    c.h(259, 7, 949, '#8a2be2', 1); c.h(392, 7, 949, '#8a2be2', 1);
    c.v(198, '#7a0a7a', 1, '24 2');
    [292, 294, 296].forEach(x => c.v(x, '#808080', 1, '7 6'));
    c.v(343, '#000', 1, '8 4 2 4'); c.v(421, '#808080', 1, '7 6'); c.v(805, '#444', 1, '6 8');
    for (let x = 617; x <= 635; x += 2) c.v(x, '#000', 1);
    trend(c, 5, 272, 962, 214); trend(c, 64, 408, 962, 469);
    candles(c, MAIN, 2, 1, 2, 4, 8, 41);
    for (let x = 617; x <= 635; x += 4) c.v(x, '#000', 1);
    c.poly('198,357 205,352 215,354 235,353 245,350 255,343 268,335 275,330 286,320 300,315 325,312 350,309 380,309 410,306 440,303 470,297 500,293 530,291 560,292 600,293 640,290 670,289 720,291 760,291 800,292 815,293 850,300 900,306 930,309 949,312', '#ffa51e', 2);
    ['6,420 14,360 22,300 27,280 33,266 36,265', '78,370 85,368 95,355 107,340 115,330 125,327', '165,386 178,386', '186,390 200,378 215,362 228,347 241,346 255,332 265,313 275,290 286,267 295,258',
     '338,297 345,293 352,292', '380,317 390,313 400,300 410,286 420,280 440,280 448,279 458,270 467,265 478,250 486,243 491,242', '598,320 605,313 614,290 625,255 632,237 640,227 644,225',
     '690,298 700,297 715,295 725,288 733,285', '783,339 792,336 800,322 808,314 815,313', '856,430 866,425 878,414', '886,415 895,412 905,403 915,388 925,382'].forEach(p => c.poly(p, '#128012', 2));
    ['36,265 41,275 50,305 62,350 70,365 78,370', '125,327 133,333 145,357 155,372 165,386', '178,386 186,390', '295,258 305,262 312,269 322,282 332,294 338,297', '352,292 362,297 372,310 380,317',
     '491,242 500,243 508,247 517,260 530,278 545,282 562,294 580,309 598,320', '644,225 651,235 660,255 670,275 680,292 690,298', '733,285 742,290 752,304 762,320 775,335 783,339',
     '815,313 820,322 827,350 836,385 841,410 848,424 856,430', '878,414 886,415', '925,382 932,381 938,388 944,405 948,420'].forEach(p => c.poly(p, '#6a0f9a', 2));
    c.dots('79,349 192,356 242,339 336,280 385,288 429,268 441,268 605,270 720,272 794,307 905,380', '#27e6ff', 3);
    c.dots('38,350 125,344 299,292 351,298 233,357 416,288 433,300 488,257 642,267 730,292 809,327 926,399', '#e0102a', 2);
    c.dots('131,352 61,387 177,405 318,304 353,303 515,280 544,286 648,285 706,302 733,300 811,333 870,401 932,417', '#e08a10', 3);
    pts('79,371 166,377 188,381 334,303 381,317 537,281 601,324 689,293 716,301 784,330 850,405 891,409').forEach(p => c.up(p[0], p[1], 4, 7, '#128012'));
    c.callout(618, 185, 624, 216);
    c.path(`M${c.X(625)} ${c.Y(208)}C${c.X(612)} ${c.Y(206)} ${c.X(600)} ${c.Y(213)} ${c.X(599)} ${c.Y(222)}S${c.X(612)} ${c.Y(236)} ${c.X(625)} ${c.Y(234)}S${c.X(643)} ${c.Y(222)} ${c.X(641)} ${c.Y(216)}S${c.X(636)} ${c.Y(207)} ${c.X(633)} ${c.Y(203)}`, { stroke: '#de2028', 'stroke-width': 3, 'stroke-linecap': 'round' });
    c.path(`M${c.X(50)} ${c.Y(379)}C${c.X(70)} ${c.Y(381)} ${c.X(94)} ${c.Y(394)} ${c.X(95)} ${c.Y(404)}S${c.X(72)} ${c.Y(414)} ${c.X(64)} ${c.Y(411)}S${c.X(51)} ${c.Y(396)} ${c.X(57)} ${c.Y(393)}`, { stroke: '#000', 'stroke-width': 3, 'stroke-linecap': 'round' });
    c.poly('183,403 165,403 178,411 192,416', '#000', 3); c.poly('178,406 186,413', '#000', 3);
    c.text(643, 165, 'No confluence signals', 'note red');
    c.text(643, 191, 'just 3100 rejection thesis', 'note red');
    c.text(392, 358, 'Stay away from this chop', 'note red');
    c.text(731, 212, 'ATL line from 30m chart', 'note black');
    c.text(224, 437, 'Connect those points to', 'note black');
    c.text(224, 463, 'get rough estimates of', 'note black');
    c.text(224, 489, 'DTL', 'note black');
    const side = (x, t, fill) => c.add('text', { transform: `translate(${c.X(x)} ${c.Y(730)}) rotate(-90)`, style: 'fill:' + fill }, t);
    side(195, 'Bell', '#7a0a7a'); [288, 290, 292].forEach(x => side(x, '945', '#8a8a8a'));
    side(340, 'Ten', '#222'); side(418, 'Ten30', '#8a8a8a'); side(802, 'BondClose', '#444');
    for (let x = 614; x <= 632; x += 2) side(x, 'Lunch', '#000');
    c.house(909.5, 951.5, 693, 729, '764');
    ['3102.5', '3100', '3097.5', '3095', '3092.5', '3090', '3087.5', '3085', '3082.5', '3080', '3077.5', '3075', '3072.5', '3070', '3067.5', '3065']
      .forEach((t, i) => c.label(125 + i * 40.4, t));
    c.tag(258, '3094.21', '#9c30ff'); c.tag(302, '3091.47', '#a52a2a'); c.tag(391, '3085.99', '#9c30ff'); c.tag(419, '3084.26', '#6c0c9c'); c.tag(466, '3081.31', '#a52a2a');
    c.clock();
  } },

  volume: { x: 5, y: 767, w: 957, h: 57, draw(c) {
    zone(c); c.grid(X_MAIN, [794]);
    const r = rng(77), tint = { b: '#b9b9f5', r: '#e6a8a8', y: '#d8d860' }, dark = { b: '#1414c8', r: '#9c3636', y: '#f0f03c' };
    sample(MAIN, 2).forEach(s => {
      const base = s.x < 190 ? 26 : s.x < 230 ? 34 : 36;
      let v = base + (r() - 0.5) * 8 + (r() > 0.93 ? 9 : 0);
      if (s.x === 270 || s.x === 482) v = 53;
      const x = Math.floor(c.X(s.x)), y = Math.round(c.Y(824 - v)), hh = c.H - y;
      c.add('rect', { x, y: y + 5, width: 2, height: hh - 5, fill: tint[s.c] });
      c.add('rect', { x, y, width: 1, height: hh, fill: dark[s.c] });
    });
    c.label(794, '2,000'); c.label(824, '0');
  } },

  osc: { x: 5, y: 851, w: 957, h: 179, draw(c) {
    zone(c); c.rect(5, 924, 949, 981, '#b3b3b3');
    c.grid(X_MAIN, [856, 890, 924, 957, 991, 1025]);
    c.h(868, 5, 958, '#a03434', 1); c.h(881, 5, 949, '#a03434', 3); c.h(881, 954, 958, '#a03434', 1);
    c.h(924, 5, 949, '#000', 3, '6 8'); c.h(941, 5, 958, '#2a6cb0', 1); c.h(953, 5, 949, '#000', 3); c.h(981, 5, 949, '#000', 3, '6 8');
    c.h(1002, 5, 958, '#3030c8', 1, '6 8'); c.h(1014, 5, 958, '#1818b0', 1); c.h(1024, 5, 949, '#1414d8', 3);
    c.poly('5,999 9,998 12,992 17,986 21,970 25,945 29,915 32,905 34,893 37,918 42,938 47,946 52,940 57,900 61,869 63,890 67,899 72,899 77,887 83,898 88,905 94,910 98,917 104,907 109,887 114,869 117,875 124,874 129,858 133,867 137,905 142,950 146,965 151,953 156,915 162,871 166,890 172,918 178,917 183,930 195,928 201,943 208,942 213,900 217,877 221,877 228,885 243,895 247,935 252,958 259,972 264,950 269,942 276,955 285,971 292,950 297,922 305,962 310,940 314,907 318,892 324,918 329,917 333,919 337,896 344,930 350,910 354,904 360,935 367,960 372,955 377,930 382,899 387,940 395,955 400,957 407,925 414,910 422,924 429,881 434,885 438,884 442,881 447,910 451,932 457,938 463,890 467,881 471,885 475,945 480,961 484,955 490,920 496,926 502,900 507,868 511,875 517,915 525,932 531,920 537,881 542,896 547,895 552,930 560,951 565,930 569,885 575,915 585,919 590,895 594,887 598,893 601,882 604,900 608,960 613,984 618,970 625,955 629,920 632,905 637,913 641,898 646,945 651,965 658,950 665,910 668,880 671,876 678,905 688,912 691,895 698,903 703,890 706,876 711,895 718,889 724,920 727,922 733,909 740,942 748,949 754,930 763,949 772,937 777,905 781,875 786,905 790,940 796,938 801,952 807,930 811,900 815,945 820,975 826,999 830,988 838,990 843,950 848,927 852,937 860,934 866,870 868,861 871,865 874,857 878,895 881,930 887,941 893,918 899,916 906,928 911,915 915,938 922,936 926,911 930,920 936,955 949,1000', '#a04ad8', 1);
    c.crisp('5,857 9,857 13,861 19,864 26,872 31,883 33,897 37,915 41,932 44,946 48,949 51,940 54,949 58,960 61,968 64,978 66,977 69,953 77,953 80,940 82,928 85,926 88,909 92,904 97,893 101,892 105,888 108,903 112,910 115,922 117,930 119,920 121,918 124,923 126,938 128,942 130,953 133,975 137,995 139,1004 143,1009 147,1004 151,995 155,1003 158,1007 161,993 164,970 167,952 169,943 171,941 173,945 177,971 181,977 184,972 187,955 191,935 194,922 198,918 203,916 207,898 210,905 213,911 217,907 220,892 223,884 226,895 230,920 233,930 238,935 240,930 243,902 246,887 252,874 256,873 258,867 262,870 268,867 272,863 277,859 282,857 287,862 290,877 294,900 298,918 301,938 305,949 308,942 312,933 315,944 319,965 324,975 329,965 332,963 335,945 340,926 344,912 349,922 352,940 355,958 360,975 366,992 371,998 377,986 380,965 384,935 390,917 397,897 401,891 404,895 408,910 412,927 416,932 419,946 423,953 427,933 429,920 432,935 436,950 439,940 443,917 447,904 451,898 456,903 460,920 463,927 467,912 471,885 475,878 478,878 482,893 485,912 489,927 493,934 496,930 499,942 502,950 506,949 510,965 517,993 525,1004 530,982 534,980 540,952 544,957 547,980 551,995 557,1002 563,975 567,980 573,1000 576,997 582,1003 587,1000 589,1005 594,1008 597,998 600,996 602,970 606,920 611,903 616,903 622,895 628,889 635,890 638,905 645,950 649,962 652,961 657,970 661,981 667,967 671,972 674,990 677,995 681,984 686,974 689,950 694,942 699,948 703,953 706,975 709,982 713,962 718,940 720,923 724,914 727,918 731,945 735,962 740,976 747,990 752,995 756,1008 762,1015 767,1006 772,1003 777,983 781,980 785,950 790,922 793,918 797,902 801,894 805,897 809,925 813,948 816,955 818,980 823,1000 828,1005 832,1010 836,1015 840,1003 843,985 850,961 857,959 860,949 866,940 870,947 875,970 879,993 883,997 886,993 889,965 892,953 897,945 902,932 907,908 911,895 914,890 917,897 923,915 926,934 929,940 933,970 937,985 941,998 949,1010', '#0808ea', 2);
    [10, 262, 285, 478].forEach(x => c.down(x, 879, 7, 11, '#6a3208'));
    [147, 595, 765, 839].forEach(x => c.up(x, 1002, 7, 11, '#128012'));
    ['100%', '80%', '60%', '40%', '20%', '0%'].forEach((t, i) => c.label(856 + i * 33.8, t));
  } },

  timesMain: { x: 5, y: 0, w: 957, h: 21, draw(c) {
    times(c, X_MAIN, ['3:01', '4:38', '7:04', '9:04', '9:45', '10:00', '10:30', '11:00', '11:45', '12:00', '13:01', '14:00', '15:00', '15:19']);
  } },

  top: { x: 1040, y: 104, w: 804, h: 248, draw(c) {
    zone(c, 1167); c.grid(X_TOP, [162, 218, 273, 328]);
    c.h(292, 1042, 1824, '#8a2be2', 1);
    trend(c, 1040, 178, 1844, 140); trend(c, 1047, 273, 1844, 316);
    candles(c, TOP, 3.64, 3, 3, 3, 8, 9);
    const fill = { m: '#f018e8', c: '#18f0f8', k: '#000' };
    const st = segments(`m 1041,218 1043,228 1048,229;c 1050,270;k 1054,229 1065,229;c 1068,243 1072,247 1078,238 1083,235 1087,243;k 1090,229;c 1093,245 1098,240;k 1100,229 1124,229;m 1126,228 1129,246;c 1133,270 1137,255;m 1144,230 1147,248;k 1150,255 1169,255;c 1172,256 1178,260 1183,249 1190,247 1195,256 1202,252 1208,235 1215,223 1222,218 1230,205 1238,190 1243,186;m 1247,172 1255,178 1260,182 1265,169 1270,183 1284,185;c 1287,202 1291,200;k 1295,185;m 1300,185 1313,186 1316,204;k 1318,204 1323,204;c 1327,213 1335,204 1341,195 1345,188;m 1347,176 1354,186 1360,178 1367,178 1369,164 1374,181;k 1376,188 1399,187;c 1402,182 1409,170;m 1413,152 1420,154 1424,165 1432,157 1440,164 1447,168 1451,176;k 1455,177 1466,176 1480,184 1488,186 1495,192 1505,194 1508,202 1517,202;c 1520,223 1524,210 1528,180 1534,178 1540,167 1546,164;m 1552,150 1558,170 1563,161 1570,173 1577,165 1583,180 1590,178;k 1595,183;m 1599,170 1606,180 1612,180 1617,173;k 1620,180 1624,183;m 1627,173 1633,186 1642,190 1650,197 1656,205 1663,212 1670,205;k 1676,212 1697,212;m 1700,197 1706,203 1711,217 1716,240 1722,270 1725,278;c 1728,303 1731,284 1738,289 1748,288 1755,284;m 1760,259;k 1762,284 1804,284;m 1806,252 1812,275 1818,290 1822,294`);
    const run = sample(st, 3.64);
    run.forEach((s, i) => {
      if (i) c.poly([[run[i - 1].x, run[i - 1].y], [s.x, s.y]], fill[s.c], 1);
      const x = c.X(s.x), y = c.Y(s.y);
      c.path(`M${x} ${y - 4}l3 6h-6z`, { fill: fill[s.c] });
    });
    c.up(1677, 223, 4, 8, '#128012'); c.up(1749, 271, 4, 8, '#128012');
    c.callout(1533, 112, 1538, 141);
    c.house(1790.5, 1832.5, 305, 341, '1764');
    c.label(107, '3100'); c.label(162, '3095'); c.label(218, '3090'); c.label(273, '3085'); c.label(328, '3080');
    c.tag(291, '3083.25', '#9c30ff'); c.tag(312, '3081.38', '#a52a2a');
    c.clock();
  } },

  rsiTop: { x: 1040, y: 379, w: 804, h: 58, draw(c) {
    zone(c); c.rect(1040, 400, 1821, 419, '#b3b3b3'); c.grid(X_TOP, [408]);
    c.h(384, 1040, 1822, '#a83030', 3); c.h(396, 1040, 1840, '#a83030', 1); c.h(398, 1040, 1840, '#c04848', 1, '7 7');
    c.h(408, 1040, 1844, '#2a6cb0', 1); c.h(410, 1040, 1822, '#777', 1, '12 8'); c.h(417, 1040, 1840, '#3030c8', 1, '7 7');
    c.h(419, 1040, 1840, '#1818b0', 1); c.h(435, 1040, 1822, '#1414e0', 3);
    c.poly('1040,405 1048,395 1056,381 1064,380 1070,391 1078,397 1085,396 1095,383 1104,382 1110,395 1117,403 1128,409 1132,408 1138,393 1150,392 1165,393 1172,404 1178,408 1185,400 1190,388 1198,382 1205,381 1210,386 1218,405 1224,416 1232,419 1243,418 1252,410 1265,402 1275,402 1282,394 1290,392 1303,393 1312,405 1322,408 1332,400 1340,412 1346,416 1352,410 1358,396 1364,392 1370,390 1380,385 1384,397 1390,403 1400,403 1410,397 1425,394 1432,389 1440,402 1450,402 1456,408 1464,402 1470,385 1478,400 1486,404 1495,396 1512,395 1521,389 1527,412 1535,416 1545,417 1556,398 1565,412 1572,410 1582,396 1590,390 1605,387 1615,384 1622,383 1632,390 1645,398 1658,415 1668,405 1682,396 1690,410 1700,408 1710,420 1725,428 1735,410 1744,395 1752,394 1758,387 1762,386 1766,395 1780,393 1790,400 1797,408 1806,397 1812,415 1822,426', '#a04ad8', 1);
    const wave = pts('1042,407 1057,410 1065,405 1072,401 1083,398 1095,402 1108,405 1115,412 1125,415 1134,416 1145,411 1162,409 1172,404 1190,401 1203,404 1215,398 1230,396 1243,395 1252,400 1262,406 1272,408 1282,411 1290,407 1297,404 1305,407 1315,412 1323,415 1332,409 1342,403 1355,402 1363,407 1375,408 1385,404 1395,403 1407,400 1420,400 1430,405 1440,409 1450,415 1460,414 1468,411 1480,413 1490,415 1508,417 1519,415 1530,406 1540,402 1548,400 1560,408 1572,412 1590,414 1600,410 1610,408 1620,410 1628,405 1637,406 1645,411 1655,415 1665,418 1675,416 1682,410 1690,402 1702,404 1710,412 1720,417 1728,417 1738,411 1750,408 1765,413 1775,412 1785,405 1797,402 1805,404 1815,413 1822,415');
    c.poly(wave.map(p => [p[0] - 3, p[1] + 1]), '#1c1cc8', 1);
    c.poly(wave, '#a82828', 2);
    sample([{ c: 'r', p: wave }], 3.64).forEach(s => c.add('circle', { cx: c.X(s.x), cy: c.Y(s.y), r: 2, fill: '#a82828' }));
    c.down(1244, 396, 4, 9, '#f03030'); c.up(1663, 419, 4, 9, '#30f030');
    c.label(380, '100%'); c.label(408, '50%'); c.label(434, '0%');
  } },

  mfo: { x: 1040, y: 463, w: 804, h: 58, draw(c) {
    zone(c); c.grid(X_TOP, [468, 515]);
    c.h(482, 1040, 1840, '#228b22', 1, '14 9'); c.h(501, 1040, 1840, '#8b1010', 1, '14 9'); c.h(492, 1040, 1844, '#000', 2);
    const m = pts('1040,488 1048,495 1060,498 1068,492 1076,488 1085,487 1092,491 1098,487 1106,491 1113,496 1122,497 1130,501 1138,496 1144,494 1150,499 1156,490 1165,485 1180,484 1200,486 1215,483 1230,480 1243,476 1252,479 1260,486 1270,488 1282,495 1290,496 1303,493 1310,496 1318,499 1330,492 1345,491 1360,488 1370,484 1380,489 1388,488 1396,492 1404,484 1412,484 1420,489 1428,489 1440,494 1450,499 1460,499 1467,495 1478,501 1490,497 1502,497 1515,501 1524,492 1532,489 1548,488 1562,491 1575,493 1585,500 1600,499 1615,494 1630,490 1645,496 1665,501 1675,500 1682,493 1696,489 1710,494 1722,501 1742,503 1755,499 1765,494 1775,489 1785,492 1792,488 1805,491 1814,492 1822,501');
    c.poly(m.map(p => [p[0] + 2, p[1]]), '#3a78b8', 1); c.poly(m, '#168a16', 1);
    c.down(1258, 482, 4, 10, '#ffc020'); c.up(1749, 501, 4, 10, '#18f0f8');
    c.label(468, '0.5'); c.label(492, '0'); c.label(515, '-0.5');
    c.tag(481, '0.2', '#006400', 25); c.tag(500, '-0.1930', '#138013', 50);
  } },

  timesTop: { x: 1040, y: 0, w: 804, h: 21, draw(c) {
    times(c, X_TOP, ['4:02', '6:50', '9:15', '10:00', '11:01', '12:00', '13:03', '14:05', '15:00', '15:18']);
  } },

  bottom: { x: 1040, y: 614, w: 804, h: 288, draw(c) {
    zone(c, 1121); c.grid(X_BOT, [642, 673, 703, 734, 764, 795, 826, 856, 887]);
    trend(c, 1040, 718, 1844, 679); trend(c, 1040, 829, 1844, 872);
    const r = rng(23), d = {};
    let n = 0;
    sample(BOTTOM, 1).forEach(s => {
      n = n * 0.5 + (r() - 0.5) * 4;
      const half = 2 + r() * 4 + Math.min(5, Math.abs(s.k));
      const x = Math.floor(c.X(s.x)) + 0.5;
      d[s.c] = (d[s.c] || '') + `M${x} ${Math.round(c.Y(s.y + n - half))}V${Math.round(c.Y(s.y + n + half))}`;
    });
    for (const k in d) c.path(d[k], { stroke: COL[k], 'shape-rendering': 'crispEdges' });
    c.callout(1521, 651, 1526, 681);
    c.house(1797.5, 1832.5, 854, 890, '199');
    ['3100', '3097.5', '3095', '3092.5', '3090', '3087.5', '3085', '3082.5', '3080'].forEach((t, i) => c.label(642 + i * 30.6, t));
    c.tag(874, '3080.94', '#a52a2a');
    c.clock();
  } },

  rsiBottom: { x: 1040, y: 928, w: 804, h: 102, draw(c) {
    zone(c); c.rect(1040, 970, 1836, 1002, '#b3b3b3'); c.grid(X_BOT, [955, 1003]);
    c.h(945, 1041, 1836, '#a83030', 3); c.h(950, 1041, 1840, '#a83030', 1); c.h(953, 1041, 1840, '#c04848', 1, '7 7');
    c.h(970, 1040, 1836, '#888', 1, '14 9'); c.h(986, 1040, 1836, '#888', 1, '14 9'); c.h(1002, 1040, 1836, '#888', 1, '14 9');
    c.h(979, 1040, 1844, '#2a6cb0', 1); c.h(1005, 1040, 1840, '#3030c8', 1, '7 7'); c.h(1008, 1040, 1840, '#1818b0', 1); c.h(1027, 1041, 1836, '#1414e0', 3);
    c.poly('1041,945 1045,955 1052,950 1057,955 1062,990 1067,997 1073,955 1080,975 1085,978 1090,995 1097,960 1103,1012 1109,970 1115,985 1120,970 1124,943 1128,975 1133,985 1140,970 1145,955 1152,1000 1158,950 1163,970 1168,1017 1173,970 1180,975 1185,960 1192,990 1199,990 1204,970 1210,975 1215,993 1220,960 1225,1000 1230,975 1236,1000 1242,953 1247,985 1252,950 1256,980 1259,940 1265,960 1271,990 1276,960 1282,980 1288,942 1292,970 1297,955 1303,1005 1308,970 1314,960 1320,1005 1327,935 1334,965 1340,960 1345,1000 1352,990 1357,970 1362,940 1368,975 1375,950 1382,1017 1388,970 1395,995 1402,948 1408,960 1414,948 1420,965 1427,980 1435,970 1440,960 1447,990 1452,970 1458,1000 1464,950 1470,985 1475,960 1480,975 1484,950 1490,965 1497,985 1502,955 1508,990 1512,1027 1517,985 1525,983 1532,960 1534,930 1538,940 1543,1004 1550,985 1560,970 1566,990 1572,960 1578,985 1587,945 1593,975 1602,947 1610,985 1617,960 1625,955 1632,1000 1640,940 1646,965 1655,998 1665,950 1670,965 1676,945 1684,975 1690,945 1697,980 1703,1010 1709,960 1715,1005 1721,950 1727,985 1736,1013 1742,975 1750,960 1757,946 1762,960 1770,1005 1778,990 1785,960 1795,965 1803,978 1810,960 1817,955 1822,1000 1828,990 1835,992', '#a04ad8', 1);
    [1174, 1195, 1201, 1314, 1515, 1694].forEach(x => c.down(x, 951, 6, 11, '#6a3208'));
    [1067, 1072, 1285, 1425, 1431, 1653, 1659, 1716, 1728, 1772, 1826, 1832].forEach(x => c.up(x, 1008, 6, 10, '#128012'));
    const wave = pts('1041,980 1045,988 1051,980 1056,990 1062,1004 1067,1011 1073,1004 1079,988 1084,998 1088,980 1096,964 1103,993 1107,993 1112,977 1120,961 1126,963 1131,955 1138,973 1146,954 1152,975 1159,985 1164,970 1168,955 1180,950 1185,955 1192,949 1198,943 1203,944 1209,965 1214,988 1222,1000 1230,978 1235,988 1241,998 1250,980 1255,963 1262,959 1269,985 1275,997 1284,1006 1290,1000 1297,965 1301,958 1312,952 1316,955 1322,978 1328,984 1334,993 1342,965 1348,982 1356,962 1361,958 1368,972 1374,985 1380,960 1385,955 1392,970 1398,990 1406,983 1415,985 1422,1000 1430,1010 1437,985 1442,980 1447,970 1453,985 1458,1000 1463,1000 1469,980 1472,982 1478,998 1485,995 1491,993 1498,1003 1505,983 1510,955 1515,950 1520,957 1528,955 1535,957 1540,985 1550,1002 1556,995 1562,999 1568,983 1576,1001 1582,990 1587,975 1592,966 1600,978 1607,998 1612,985 1617,970 1622,960 1628,985 1635,999 1642,1000 1650,1003 1657,1012 1662,1008 1668,993 1675,980 1680,960 1687,955 1695,952 1700,970 1707,992 1712,1005 1720,1010 1732,1003 1737,980 1742,972 1747,980 1757,975 1762,990 1772,1010 1778,990 1782,975 1790,973 1797,955 1803,953 1810,975 1816,993 1822,1010 1830,1012 1836,1010');
    c.poly(wave, '#a82828', 3);
    sample([{ c: 'r', p: wave }], 1.5).forEach(s => c.add('circle', { cx: c.X(s.x), cy: c.Y(s.y), r: 2, fill: '#a82828' }));
    ['100%', '75%', '50%', '25%', '0%'].forEach((t, i) => c.label(931 + i * 24, t));
  } },

  timesBottom: { x: 1040, y: 0, w: 804, h: 21, draw(c) {
    times(c, X_BOT, ['6:00', '8:32', '9:31', '9:45', '10:00', '10:30', '11:00', '11:30', '12:00', '13:00', '14:00', '15:00']);
  } }
};

function drawAll() {
  document.querySelectorAll('svg[data-chart]').forEach(svg => {
    const chart = CHARTS[svg.dataset.chart];
    chart.draw(surface(svg, chart));
  });
}
drawAll();
window.addEventListener('resize', drawAll);
document.getElementById('sym1').select();
```
